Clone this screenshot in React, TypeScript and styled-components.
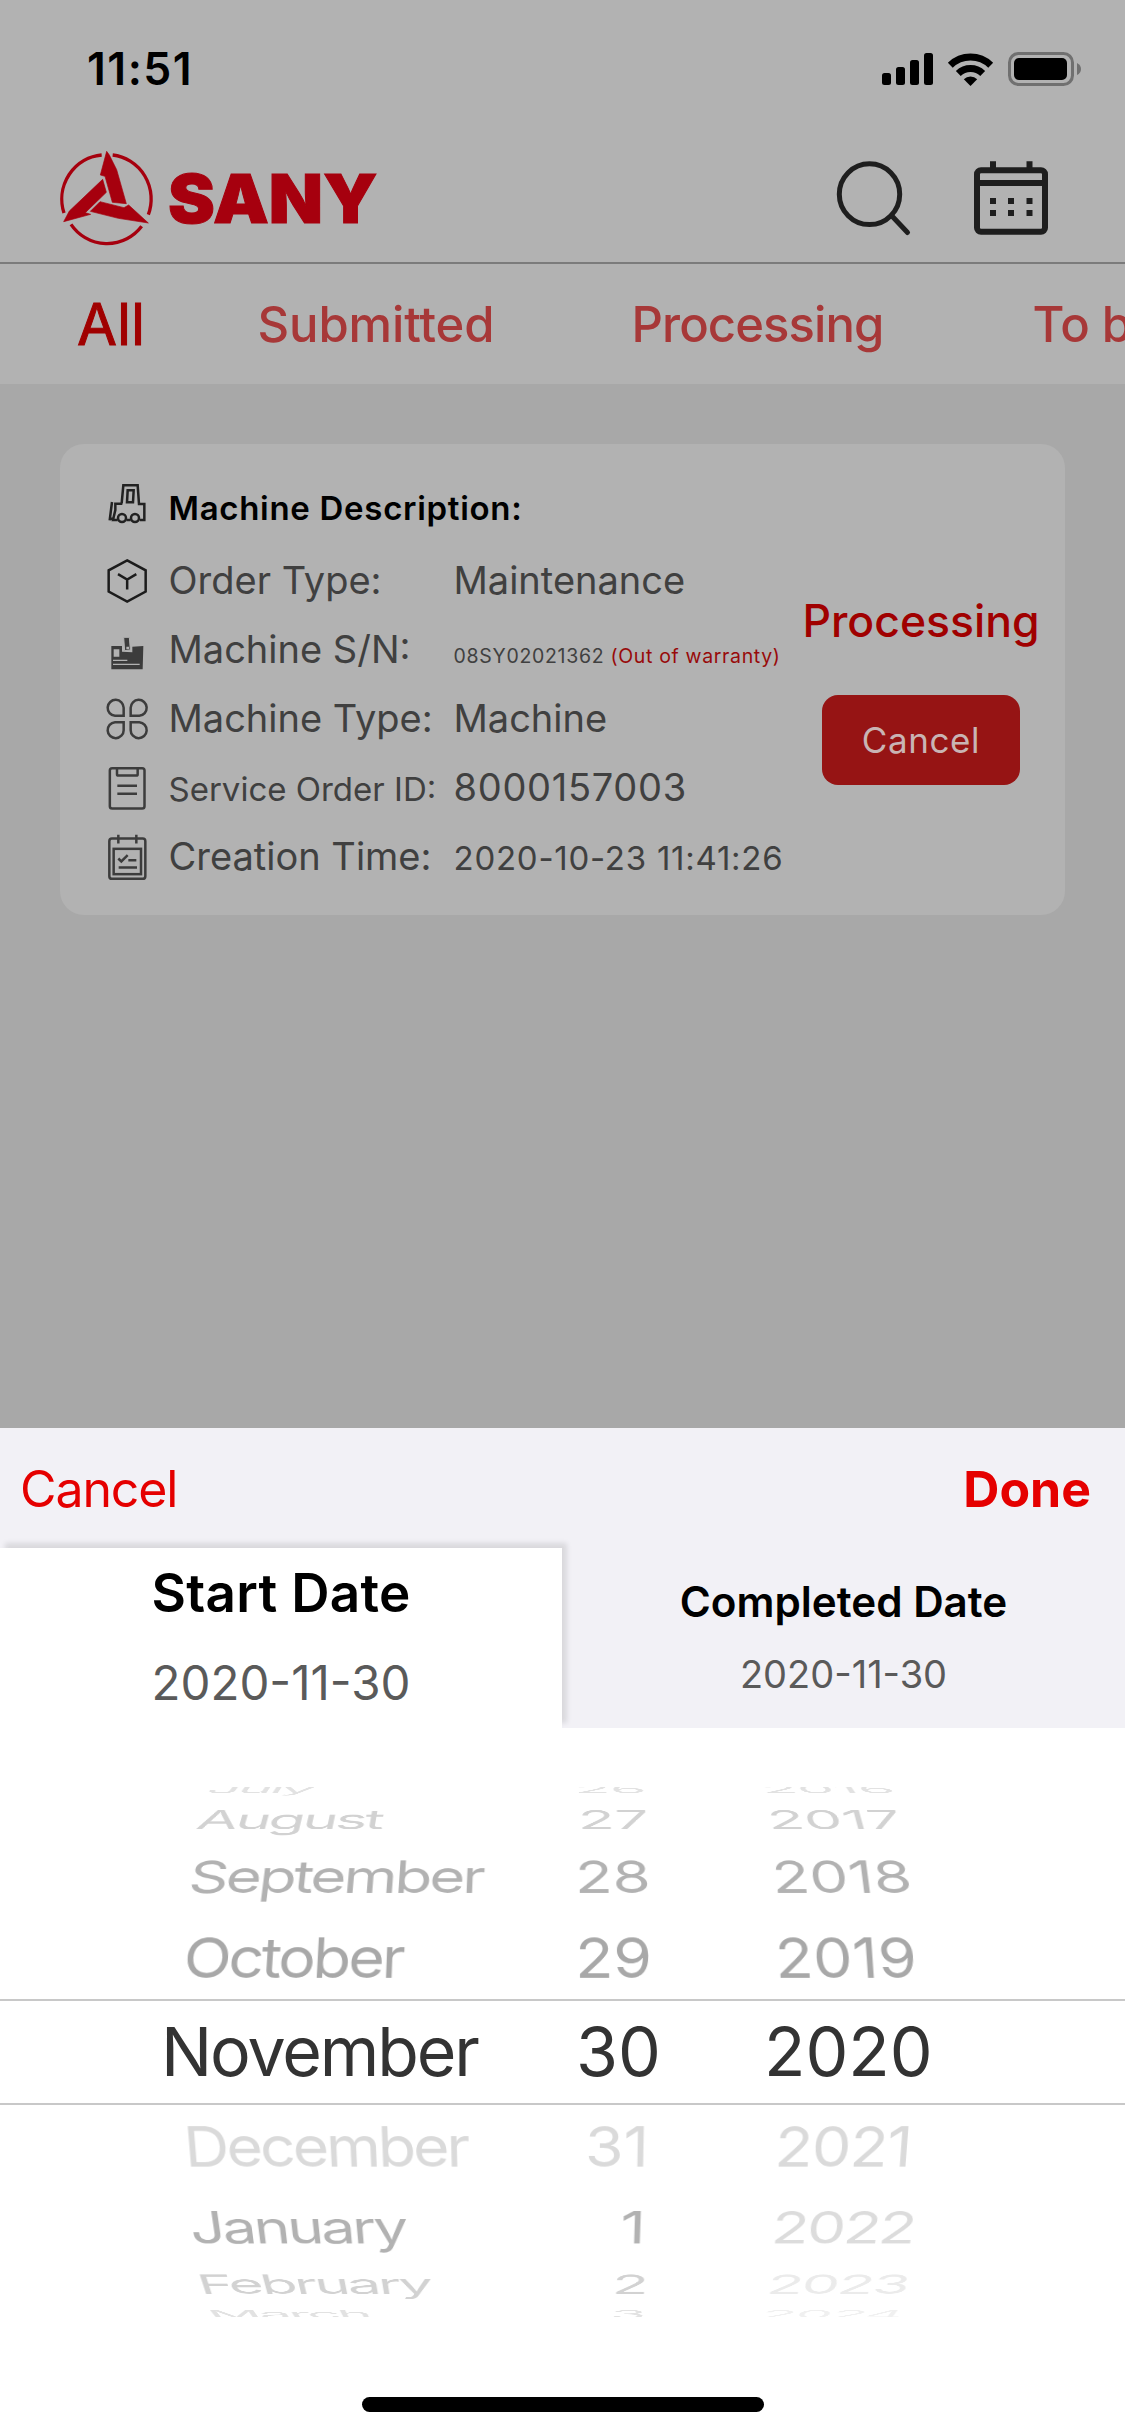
import React from "react";
import styled, { createGlobalStyle } from "styled-components";

const GlobalStyle = createGlobalStyle`
  * { box-sizing: border-box; }
  html, body { margin: 0; padding: 0; }
  body { font-family: Inter, "Liberation Sans", sans-serif; background: #a8a8a8; }
  svg { display: block; overflow: visible; flex: none; }
`;

const Screen = styled.div`
  display: flex;
  flex-direction: column;
  width: 1125px;
  height: 2436px;
  overflow: hidden;
  background: #a8a8a8;
`;

const StatusBar = styled.div`
  display: flex;
  align-items: center;
  justify-content: space-between;
  height: 138px;
  padding: 0 44px 0 87px;
  background: #b2b2b2;
`;

const Clock = styled.span`
  font-size: 44.5px;
  font-weight: 600;
  letter-spacing: 1.5px;
  color: #000;
`;

const StatusIcons = styled.div`
  display: flex;
  align-items: center;
  gap: 15px;
`;

const Header = styled.header`
  display: flex;
  align-items: center;
  justify-content: space-between;
  height: 126px;
  padding: 0 77px 0 50px;
  background: #b2b2b2;
  border-bottom: 2px solid #7b7b7b;
`;

const Brand = styled.div`
  display: flex;
  align-items: center;
`;

const Wordmark = styled.span`
  margin-left: 5px;
  padding-bottom: 4px;
  font-size: 68px;
  font-weight: 900;
  line-height: 1;
  color: #a6000e;
  -webkit-text-stroke: 1px #a6000e;
  transform: scaleX(1.035);
  transform-origin: left center;
`;

const HeaderActions = styled.div`
  display: flex;
  align-items: center;
  gap: 64px;
  padding-bottom: 2px;
`;

const TabStrip = styled.nav`
  display: flex;
  align-items: center;
  height: 120px;
  padding-left: 77px;
  background: #b2b2b2;
  white-space: nowrap;
  overflow: hidden;
`;

const FilterTab = styled.span<{ $active?: boolean; $width: number; $spacing?: number }>`
  flex: none;
  width: ${(p) => p.$width}px;
  font-size: ${(p) => (p.$active ? 58 : 49)}px;
  font-weight: ${(p) => (p.$active ? 400 : 500)};
  letter-spacing: ${(p) => p.$spacing ?? 0}px;
  -webkit-text-stroke: ${(p) => (p.$active ? 1 : 0)}px #a00000;
  color: ${(p) => (p.$active ? "#a00000" : "#a73838")};
`;

const OrderCard = styled.article`
  display: flex;
  height: 471px;
  margin: 60px 60px 0;
  padding: 27px 0 25px 45px;
  border-radius: 24px;
  background: #b2b2b2;
`;

const Details = styled.div`
  flex: 1;
  min-width: 0;
`;

const DetailRow = styled.div<{ $title?: boolean }>`
  display: grid;
  grid-template-columns: 44px 1fr;
  column-gap: 19.5px;
  align-items: center;
  height: ${(p) => (p.$title ? 74 : 69)}px;
`;

const DetailText = styled.div`
  display: flex;
  align-items: baseline;
  padding-top: 1px;
  line-height: 69px;
  white-space: nowrap;
`;

const CardTitle = styled.span`
  font-size: 33px;
  font-weight: 600;
  letter-spacing: 0.7px;
  color: #000;
`;

const Label = styled.span<{ $small?: boolean }>`
  flex: none;
  width: 285px;
  font-size: ${(p) => (p.$small ? 33 : 38)}px;
  letter-spacing: 0;
  color: #404040;
`;

const Value = styled.span<{ $size?: number; $spacing?: number }>`
  font-size: ${(p) => p.$size ?? 38}px;
  letter-spacing: ${(p) => p.$spacing ?? 0}px;
  color: #404040;
`;

const Warranty = styled.span`
  letter-spacing: 0.65px;
  color: #980a0a;
`;

const OrderSide = styled.div`
  display: flex;
  flex-direction: column;
  align-items: center;
  width: 288px;
  padding-top: 120px;
`;

const OrderState = styled.span`
  font-size: 44.5px;
  font-weight: 500;
  line-height: 60px;
  color: #a00000;
`;

const CancelOrder = styled.button`
  width: 198px;
  height: 90px;
  margin-top: 44px;
  padding: 0;
  border: 0;
  border-radius: 16px;
  background: #961414;
  font-family: inherit;
  font-size: 35px;
  letter-spacing: 0.6px;
  color: #c9b4b4;
`;

const Sheet = styled.section`
  display: flex;
  flex-direction: column;
  align-items: center;
  height: 1008px;
  margin-top: auto;
  background: #fff;
`;

const SheetBar = styled.div`
  display: flex;
  align-items: center;
  justify-content: space-between;
  width: 100%;
  height: 120px;
  padding: 2px 34px 0 20px;
  background: #f2f1f6;
  color: #e50000;
`;

const SheetAction = styled.span<{ $bold?: boolean }>`
  font-size: 50px;
  font-weight: ${(p) => (p.$bold ? 700 : 400)};
  letter-spacing: ${(p) => (p.$bold ? 0 : -1.1)}px;
`;

const RangeTabs = styled.div`
  display: grid;
  grid-template-columns: 562px 563px;
  width: 100%;
  height: 180px;
  background: #f2f1f6;
`;

const RangeTab = styled.div<{ $active?: boolean }>`
  display: flex;
  flex-direction: column;
  align-items: center;
  padding-top: ${(p) => (p.$active ? 10 : 24)}px;
  background: ${(p) => (p.$active ? "#fff" : "transparent")};
  box-shadow: ${(p) => (p.$active ? "5px -5px 5px rgba(0, 0, 0, 0.1)" : "none")};
`;

const RangeName = styled.span<{ $active?: boolean }>`
  font-size: ${(p) => (p.$active ? 53 : 42.2)}px;
  font-weight: 600;
  letter-spacing: ${(p) => (p.$active ? 0.3 : 0)}px;
  line-height: ${(p) => (p.$active ? 70 : 60)}px;
  color: #000;
`;

const RangeDate = styled.span<{ $active?: boolean }>`
  margin-top: ${(p) => (p.$active ? 20 : 12)}px;
  font-size: ${(p) => (p.$active ? 47.5 : 38)}px;
  line-height: ${(p) => (p.$active ? 70 : 60)}px;
  color: #5a5a5a;
`;

const Wheel = styled.div`
  width: 100%;
  height: 530px;
  margin-top: 59px;
  overflow: hidden;
`;

const WheelRow = styled.div<{
  $height: number;
  $tilt: number;
  $depth: number;
  $line: number;
  $color: string;
  $end?: boolean;
}>`
  display: grid;
  grid-template-columns: 184px 300px 168px 123px 1fr;
  align-items: ${(p) => (p.$end ? "end" : "start")};
  height: ${(p) => p.$height}px;
  line-height: ${(p) => p.$line}px;
  font-size: 62.5px;
  color: ${(p) => p.$color};
  transform-origin: 50% ${(p) => (p.$end ? p.$height - p.$line / 2 : p.$line / 2)}px;
  transform: perspective(2200px) translateZ(${(p) => -p.$depth}px) rotateX(${(p) => p.$tilt}deg);
`;

const SelectedRow = styled.div`
  display: grid;
  grid-template-columns: 161px 300px 200px 103px 1fr;
  height: 106px;
  border-top: 2px solid #c8c8c8;
  border-bottom: 2px solid #c8c8c8;
  line-height: 100px;
  font-size: 68px;
  color: #333;
`;

const Month = styled.span<{ $spacing?: number }>`
  grid-column: 2;
  letter-spacing: ${(p) => p.$spacing ?? -0.047}em;
  white-space: nowrap;
`;

const Day = styled.span<{ $inset?: number }>`
  grid-column: 3;
  padding-right: ${(p) => p.$inset ?? 0}px;
  text-align: right;
`;

const Year = styled.span<{ $color?: string; $spacing?: number }>`
  grid-column: 5;
  letter-spacing: ${(p) => p.$spacing ?? 0}px;
  color: ${(p) => p.$color ?? "inherit"};
`;

const HomeIndicator = styled.div`
  width: 402px;
  height: 15px;
  margin-top: 80px;
  border-radius: 8px;
  background: #000;
`;

const SignalIcon = () => (
  <svg width="51" height="32" viewBox="0 0 51 32">
    <rect x="0" y="20" width="9" height="12" rx="2.5" />
    <rect x="14" y="14" width="9" height="18" rx="2.5" />
    <rect x="28" y="7" width="9" height="25" rx="2.5" />
    <rect x="42" y="0" width="9" height="32" rx="2.5" />
  </svg>
);

const WifiIcon = () => (
  <svg width="45" height="33" viewBox="0 0 45 33">
    <g fill="none" stroke="#000" strokeWidth="7">
      <path d="M2.3 12.3 A29 29 0 0 1 42.7 12.3" />
      <path d="M10.3 20.5 A17.6 17.6 0 0 1 34.7 20.5" />
    </g>
    <path d="M22.5 33 L15.8 26.2 A9.6 9.6 0 0 1 29.2 26.2 Z" />
  </svg>
);

const BatteryIcon = () => (
  <svg width="73" height="34" viewBox="0 0 73 34">
    <rect x="1.5" y="1.5" width="63" height="31" rx="9" fill="none" stroke="#707070" strokeWidth="3" />
    <rect x="6" y="6" width="53" height="22" rx="5" />
    <path d="M69 11 Q73 13 73 17 Q73 21 69 23 Z" fill="#707070" />
  </svg>
);

const Emblem = () => (
  <svg width="113" height="120" viewBox="0 3 339 360">
    <g fill="none" stroke="#a6000e" strokeWidth="10">
      <path d="M42 222 A131 133 0 0 1 155 48" />
      <path d="M188 48 A131 133 0 0 1 295 227" />
      <path d="M63 256 A131 133 0 0 0 275 262" />
    </g>
    <g fill="#a6000e" stroke="#a6000e" strokeWidth="2">
      <path d="M170 37 L178 48 L200 92 L229 194 L187 190 L165 112 L151 108 Z" />
      <path d="M41 248 L58 216 L158 121 L169 160 L106 221 L122 226 Z" />
      <path d="M295 252 L205 238 L121 217 L150 188 L222 206 L236 198 Z" />
    </g>
  </svg>
);

const SearchIcon = () => (
  <svg width="73" height="76" viewBox="0 0 73 76">
    <g fill="none" stroke="#1e1e1e" strokeWidth="5" strokeLinecap="round">
      <ellipse cx="32.5" cy="33.2" rx="30.2" ry="30.4" />
      <path d="M54.5 54.5 L70.5 71.5" />
    </g>
  </svg>
);

const CalendarIcon = () => (
  <svg width="74" height="76" viewBox="0 0 74 76">
    <g fill="none" stroke="#1e1e1e" strokeWidth="6">
      <rect x="3" y="9.3" width="68" height="61.4" rx="4" />
      <path d="M3 22 H71 M19 0.300 V8 M55.500 0.300 V8" />
    </g>
    <g fill="#1e1e1e">
      {[16, 34, 52.5].map((x) => (
        <React.Fragment key={x}>
          <rect x={x} y="37" width="6" height="6" />
          <rect x={x} y="49" width="6" height="6" />
        </React.Fragment>
      ))}
    </g>
  </svg>
);

const Glyph = ({ top, children, color = "#3c3c3c" }: { top: number; color?: string; children: React.ReactNode }) => (
  <svg width="44" height="46" viewBox={`166 ${top} 132 138`} fill="none" stroke={color} strokeWidth="7.5">
    {children}
  </svg>
);

const TruckGlyph = () => (
  <Glyph top={165} color="#222">
    <path d="M216 220 L221 166 H264 L268 222 H284 V270 H270 M243 270 H230 M204 270 H190 L197 240 V221 H218" />
    <path d="M234 181 H252 L250 217 H232 Z M187 216 L180 271 M180 266 H192" />
    <circle cx="217" cy="264" r="12" />
    <circle cx="256" cy="264" r="12" />
  </Glyph>
);

const BoxGlyph = () => (
  <Glyph top={379.5} color="#1c1c1c">
    <path d="M232.500 389.500 L288 419.500 V483 L232.500 513 L177 483 V419.500 Z" />
    <path d="M205 431 L232.500 447 L260 431 M232.500 447 V477" />
  </Glyph>
);

const SerialGlyph = () => (
  <Glyph top={590}>
    <path
      d="M185 638 H217 V655 L248 657 V640 L281 638 L279 708 H185 Z"
      fill="#3c3c3c"
      stroke="none"
    />
    <path d="M222 612 H239 L242 650 L225 652 Z" fill="#3c3c3c" stroke="#b2b2b2" strokeWidth="3" />
    <path d="M192 648 H209 V670 H192 Z M230 640 H238 V648 H230 Z" fill="#b2b2b2" stroke="none" />
    <path d="M190 681 H233 M190 693 H270" stroke="#b2b2b2" strokeWidth="4" />
  </Glyph>
);

const TypeGlyph = () => (
  <Glyph top={794.5}>
    <path d="M222 857 H196 A24 24 0 1 1 222 833 Z" />
    <path d="M243 857 H269 A24 24 0 1 0 243 833 Z" />
    <path d="M222 876 H196 A24 24 0 1 0 222 900 Z" />
    <path d="M243 876 H269 A24 24 0 1 1 243 900 Z" />
  </Glyph>
);

const ServiceGlyph = () => (
  <Glyph top={1002.5}>
    <rect x="180.500" y="1012" width="104" height="121" rx="7" />
    <path d="M202 1013 V1030 Q202 1034 206 1034 H260 Q264 1034 264 1030 V1013 M203 1065 H262 M203 1089 H262" />
  </Glyph>
);

const CreationGlyph = () => (
  <Glyph top={1209.5}>
    <rect x="179" y="1223" width="108" height="121" rx="8" />
    <rect x="192" y="1254" width="82" height="76" />
    <path d="M206 1212 V1238 M260 1212 V1238 M206 1283 L215 1292 L234 1273 M236 1288 H260 M207 1310 H262" />
  </Glyph>
);

type WheelItem = {
  month: string;
  day: string;
  year: string;
  height: number;
  line: number;
  tilt: number;
  depth: number;
  color: string;
  yearColor?: string;
  yearSpacing?: number;
  dayInset?: number;
  end?: boolean;
};

const before: WheelItem[] = [
  { month: "July", day: "26", year: "2016", height: 15, line: 4, tilt: 79, depth: 150, color: "#e2e2e2" },
  { month: "August", day: "27", year: "2017", height: 35, line: 35, tilt: 63.5, depth: 82, color: "#d2d2d2" },
  { month: "September", day: "28", year: "2018", height: 79, line: 79, tilt: 43, depth: 33, color: "#b2b2b2" },
  { month: "October", day: "29", year: "2019", height: 83, line: 83, tilt: 26, depth: 0, color: "#a8a8a8" },
];

const after: WheelItem[] = [
  { month: "December", day: "31", year: "2021", height: 82, line: 83, tilt: -26, depth: 0, color: "#dadada", dayInset: 3, yearSpacing: -1.2 },
  { month: "January", day: "1", year: "2022", height: 79, line: 80, tilt: -43, depth: 33, color: "#b2b2b2", yearColor: "#dcdcdc", dayInset: 5, yearSpacing: -2.2 },
  { month: "February", day: "2", year: "2023", height: 36, line: 36, tilt: -63.5, depth: 82, color: "#d2d2d2", yearColor: "#ebebeb", yearSpacing: -2 },
  { month: "March", day: "3", year: "2024", height: 15, line: 6, tilt: -79, depth: 150, color: "#e2e2e2", yearColor: "#f0f0f0", yearSpacing: -1, end: true },
];

const renderRow = (item: WheelItem) => (
  <WheelRow
    key={item.month}
    $height={item.height}
    $line={item.line}
    $tilt={item.tilt}
    $depth={item.depth}
    $color={item.color}
    $end={item.end}
  >
    <Month>{item.month}</Month>
    <Day $inset={item.dayInset}>{item.day}</Day>
    <Year $color={item.yearColor} $spacing={item.yearSpacing}>{item.year}</Year>
  </WheelRow>
);

export default function App() {
  return (
    <Screen>
      <GlobalStyle />
      <StatusBar>
        <Clock>11:51</Clock>
        <StatusIcons>
          <SignalIcon />
          <WifiIcon />
          <BatteryIcon />
        </StatusIcons>
      </StatusBar>
      <Header>
        <Brand>
          <Emblem />
          <Wordmark>SANY</Wordmark>
        </Brand>
        <HeaderActions>
          <SearchIcon />
          <CalendarIcon />
        </HeaderActions>
      </Header>
      <TabStrip>
        <FilterTab $active $width={180.5}>All</FilterTab>
        <FilterTab $width={374} $spacing={-0.1}>Submitted</FilterTab>
        <FilterTab $width={401} $spacing={-0.9}>Processing</FilterTab>
        <FilterTab $width={300} $spacing={-0.5}>To b</FilterTab>
      </TabStrip>
      <OrderCard>
        <Details>
          <DetailRow $title>
            <TruckGlyph />
            <DetailText><CardTitle>Machine Description:</CardTitle></DetailText>
          </DetailRow>
          <DetailRow>
            <BoxGlyph />
            <DetailText><Label>Order Type:</Label><Value>Maintenance</Value></DetailText>
          </DetailRow>
          <DetailRow>
            <SerialGlyph />
            <DetailText>
              <Label>Machine S/N:</Label>
              <Value $size={19.5} $spacing={0.7}>08SY02021362 <Warranty>(Out of warranty)</Warranty></Value>
            </DetailText>
          </DetailRow>
          <DetailRow>
            <TypeGlyph />
            <DetailText><Label>Machine Type:</Label><Value>Machine</Value></DetailText>
          </DetailRow>
          <DetailRow>
            <ServiceGlyph />
            <DetailText><Label $small>Service Order ID:</Label><Value $spacing={0.7}>8000157003</Value></DetailText>
          </DetailRow>
          <DetailRow>
            <CreationGlyph />
            <DetailText><Label>Creation Time:</Label><Value $size={33} $spacing={0.75}>2020-10-23 11:41:26</Value></DetailText>
          </DetailRow>
        </Details>
        <OrderSide>
          <OrderState>Processing</OrderState>
          <CancelOrder>Cancel</CancelOrder>
        </OrderSide>
      </OrderCard>
      <Sheet>
        <SheetBar>
          <SheetAction>Cancel</SheetAction>
          <SheetAction $bold>Done</SheetAction>
        </SheetBar>
        <RangeTabs>
          <RangeTab $active>
            <RangeName $active>Start Date</RangeName>
            <RangeDate $active>2020-11-30</RangeDate>
          </RangeTab>
          <RangeTab>
            <RangeName>Completed Date</RangeName>
            <RangeDate>2020-11-30</RangeDate>
          </RangeTab>
        </RangeTabs>
        <Wheel>
          {before.map(renderRow)}
          <SelectedRow>
            <Month $spacing={-0.031}>November</Month>
            <Day>30</Day>
            <Year>2020</Year>
          </SelectedRow>
          {after.map(renderRow)}
        </Wheel>
        <HomeIndicator />
      </Sheet>
    </Screen>
  );
}
